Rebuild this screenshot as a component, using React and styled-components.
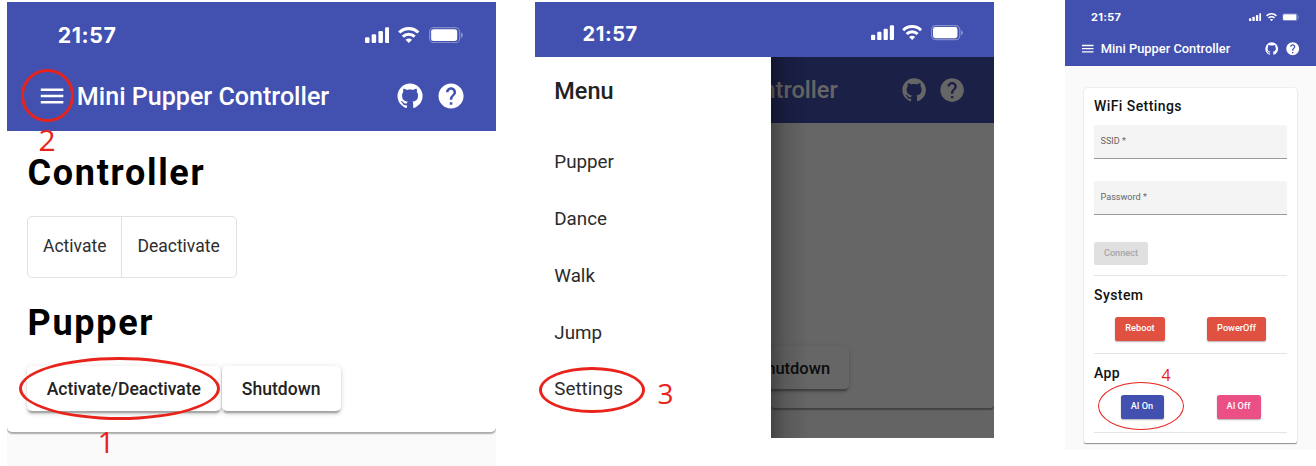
import React from "react";
import styled, { createGlobalStyle } from "styled-components";

const GlobalStyle = createGlobalStyle`
  body { margin: 0; background: #fff; }
  * { box-sizing: border-box; }
  h1, h2, h3, p, ul { margin: 0; padding: 0; }
`;

const u = (n) => `calc(var(--u) * ${n})`;

const BLUE = "#4250af";
const RED = "#e8231b";

const Page = styled.main`
  position: relative;
  display: flex;
  align-items: flex-start;
  width: 1316px;
  height: 466px;
  overflow: hidden;
  background: #fff;
  font-family: Roboto, "Liberation Sans", sans-serif;
  white-space: nowrap;
`;

const Phone = styled.section`
  --u: ${(p) => p.$unit}px;
  display: flex;
  flex-direction: column;
  flex: none;
  width: ${(p) => p.$width}px;
  height: ${(p) => p.$height}px;
  margin: ${(p) => p.$top}px 0 0 ${(p) => p.$left}px;
  background: #fafafa;
  overflow: hidden;
`;

const StatusRow = styled.div`
  display: flex;
  flex: none;
  align-items: center;
  height: ${u(47.1)};
  padding: ${u(5.8)} ${u(26)} 0 ${u(40.4)};
  background: ${BLUE};
  color: #fff;
`;

const Clock = styled.span`
  flex: 1;
  padding-top: ${u(0.7)};
  font: 700 ${u(17)} / 1.2 Inter, sans-serif;
  letter-spacing: ${u(0.5)};
`;

const StatusIcon = styled.svg`
  display: block;
  width: ${(p) => u(p.$w)};
  height: ${u(13)};
  margin-left: ${(p) => u(p.$gap)};
`;

const ToolbarRow = styled.div`
  display: flex;
  flex: none;
  align-items: center;
  height: ${u(56)};
  padding: 0 ${u(23.9)} 0 ${(p) => u(p.$start)};
  background: ${BLUE};
  color: #fff;
`;

const Icon = styled.svg`
  display: block;
  flex: none;
  width: ${u(24)};
  height: ${u(24)};
  margin-left: ${(p) => u(p.$gap || 0)};
  fill: currentColor;
`;

const Title = styled.h1`
  flex: ${(p) => (p.$clip ? "none" : 1)};
  margin-left: ${u(8)};
  padding-top: ${u(0.6)};
  font-size: ${u(20)};
  font-weight: 500;
  line-height: ${u(28)};
`;

const DimTitleSlot = styled.div`
  display: flex;
  flex: 1;
  min-width: 0;
  justify-content: flex-end;
  overflow: hidden;
  padding-right: ${u(52.6)};
`;

function StatusBar() {
  return (
    <StatusRow>
      <Clock>21:57</Clock>
      <StatusIcon $w={19.6} $gap={0} viewBox="0 0 19.6 13" fill="#fff">
        <rect x="0" y="8.2" width="3.6" height="4.6" rx="1" />
        <rect x="5.3" y="5.8" width="3.6" height="7" rx="1" />
        <rect x="10.7" y="3.2" width="3.6" height="9.6" rx="1" />
        <rect x="16" y="0.2" width="3.6" height="12.6" rx="1" />
      </StatusIcon>
      <StatusIcon $w={17.2} $gap={7.4} viewBox="0 0 17.2 13" fill="none" stroke="#fff" strokeWidth="2.5">
        <path d="M1 4.4C5.2.2 12 .2 16.2 4.4" />
        <path d="M3.9 7.7C6.5 5.1 10.7 5.1 13.3 7.7" />
        <path d="M8.6 12.8 6 10.2C7.5 8.8 9.7 8.8 11.2 10.2Z" fill="#fff" stroke="none" />
      </StatusIcon>
      <StatusIcon $w={27.4} $gap={7.2} viewBox="0 0 27.4 13" fill="none">
        <rect x="0.5" y="0.5" width="24" height="12" rx="3.6" stroke="#fff" strokeOpacity="0.35" />
        <rect x="1.7" y="1.8" width="20.8" height="9.4" rx="2" fill="#fff" />
        <path d="M25.7 4.4v4.2c.8-.35 1.3-1.2 1.3-2.1s-.5-1.75-1.3-2.1z" fill="#fff" fillOpacity="0.45" />
      </StatusIcon>
    </StatusRow>
  );
}

function ToolbarActions() {
  return (
    <>
      <Icon viewBox="0 0 24 24">
        <path d="M12 2A10 10 0 0 0 2 12c0 4.42 2.87 8.17 6.84 9.5.5.08.66-.23.66-.5v-1.69c-2.77.6-3.36-1.34-3.36-1.34-.46-1.16-1.11-1.47-1.11-1.47-.91-.62.07-.6.07-.6 1 .07 1.53 1.03 1.53 1.03.87 1.52 2.34 1.07 2.91.83.09-.65.35-1.09.63-1.34-2.22-.25-4.55-1.11-4.55-4.92 0-1.11.38-2 1.03-2.71-.1-.25-.45-1.29.1-2.64 0 0 .84-.27 2.75 1.02.79-.22 1.65-.33 2.5-.33s1.71.11 2.5.33c1.91-1.29 2.75-1.02 2.75-1.02.55 1.35.2 2.39.1 2.64.65.71 1.03 1.6 1.03 2.71 0 3.82-2.34 4.66-4.57 4.91.36.31.69.92.69 1.85V21c0 .27.16.59.67.5C19.14 20.16 22 16.42 22 12A10 10 0 0 0 12 2z" />
      </Icon>
      <Icon $gap={8.3} viewBox="0 0 24 24">
        <path d="M12 2C6.48 2 2 6.48 2 12s4.48 10 10 10 10-4.48 10-10S17.52 2 12 2zm1 17h-2v-2h2v2zm2.07-7.75l-.9.92C13.45 12.9 13 13.5 13 15h-2v-.5c0-1.1.45-2.1 1.17-2.83l1.24-1.26c.37-.36.59-.86.59-1.41 0-1.1-.9-2-2-2s-2 .9-2 2H8c0-2.21 1.79-4 4-4s4 1.79 4 4c0 .88-.36 1.68-.93 2.25z" />
      </Icon>
    </>
  );
}

function Toolbar() {
  return (
    <ToolbarRow $start={23.7}>
      <Icon viewBox="0 0 24 24">
        <path d="M3 18h18v-2H3v2zm0-5h18v-2H3v2zm0-7v2h18V6H3z" />
      </Icon>
      <Title>Mini Pupper Controller</Title>
      <ToolbarActions />
    </ToolbarRow>
  );
}

const ControllerCard = styled.div`
  flex: none;
  height: 301px;
  padding: 21.7px 20px 0;
  background: #fff;
  border-radius: 0 0 5px 5px;
  box-shadow: 0 1.5px 1.5px rgba(0, 0, 0, 0.32);
`;

const BigHeading = styled.h2`
  margin: ${(p) => p.$top || 0}px 0 0 0.5px;
  font-size: 36px;
  font-weight: 700;
  line-height: 40px;
  letter-spacing: 1.7px;
  color: #000;
`;

const ToggleGroup = styled.div`
  display: flex;
  width: 210px;
  height: 61.5px;
  margin-top: 23.5px;
  border: 1.5px solid #e2e2e2;
  border-radius: 5px;
`;

const Toggle = styled.span`
  display: flex;
  align-items: center;
  padding: 0 15px 2px 15px;
  font-size: 17.5px;
  color: #2e2e2e;

  & + & {
    border-left: 1px solid #e0e0e0;
  }
`;

const ButtonRow = styled.div`
  display: flex;
  gap: 1px;
  margin-top: 22.5px;
`;

const RaisedButton = styled.span`
  display: flex;
  align-items: center;
  justify-content: center;
  width: ${(p) => u(p.$w)};
  height: ${u(36)};
  flex: none;
  padding-top: 1px;
  border-radius: ${u(4)};
  background: #fff;
  color: #222;
  font-size: ${u(14)};
  font-weight: 500;
  box-shadow: 0 ${u(3)} ${u(1)} ${u(-2)} rgba(0, 0, 0, 0.2),
    0 ${u(2)} ${u(2)} rgba(0, 0, 0, 0.14), 0 ${u(1)} ${u(5)} rgba(0, 0, 0, 0.12);
`;

const DrawerBody = styled.div`
  display: flex;
  flex: 1;
  min-height: 0;
`;

const Drawer = styled.nav`
  width: 236px;
  flex: none;
  padding-left: 19.3px;
  background: #fff;
  color: #222;
`;

const DrawerTitle = styled.h2`
  padding-top: 1px;
  font-size: 23.5px;
  font-weight: 500;
  line-height: 67px;
`;

const MenuList = styled.ul`
  padding-top: 9px;
  list-style: none;
`;

const MenuItem = styled.li`
  font-size: 18.8px;
  line-height: 56.7px;
  color: #2b2b2b;
`;

const Backdrop = styled.div`
  position: relative;
  flex: 1;
  min-width: 0;
  overflow: hidden;
  background: #fafafa;

  &::after {
    content: "";
    position: absolute;
    inset: 0;
    background: linear-gradient(90deg, rgba(0, 0, 0, 0.32), rgba(0, 0, 0, 0.12) 14px, transparent 38px),
      rgba(0, 0, 0, 0.6);
  }
`;

const BackdropCard = styled.div`
  display: flex;
  align-items: flex-end;
  justify-content: flex-end;
  height: 284.3px;
  padding: 0 145px 18.8px 0;
  background: #fff;
  border-radius: 0 0 4px 4px;
  box-shadow: 0 1.5px 1.5px rgba(0, 0, 0, 0.35);
`;

const SettingsCard = styled.div`
  width: 213px;
  height: 355.2px;
  margin: 21.2px 0 0 19px;
  padding: 8.5px 10px 0;
  background: #fff;
  border-radius: 2.6px;
  box-shadow: 0 1.3px 0.7px -0.7px rgba(0, 0, 0, 0.25), 0 0.7px 1px rgba(0, 0, 0, 0.14),
    0 0.6px 2px rgba(0, 0, 0, 0.12);
`;

const SectionTitle = styled.h3`
  margin-top: ${(p) => p.$top || 0}px;
  font-size: 14px;
  font-weight: 500;
  line-height: 20px;
  letter-spacing: 0.42px;
  color: #111;
`;

const Field = styled.div`
  height: 33.5px;
  margin-top: ${(p) => p.$top}px;
  padding-left: 6.5px;
  border-bottom: 1px solid #999;
  border-radius: 2px 2px 0 0;
  background: #f4f4f4;
  font-size: 9.1px;
  line-height: 33px;
  color: #666;
`;

const Rule = styled.div`
  height: 1px;
  margin-top: ${(p) => p.$top}px;
  background: #e4e4e4;
`;

const ActionRow = styled.div`
  display: flex;
  justify-content: space-around;
  margin-top: ${(p) => p.$top}px;
`;

const ActionButton = styled.span`
  display: flex;
  align-items: center;
  justify-content: center;
  width: ${(p) => p.$w}px;
  height: 24px;
  padding-bottom: 2px;
  border-radius: 2.6px;
  background: ${(p) => p.$color};
  color: #fff;
  font-size: 9.2px;
  font-weight: 500;
  box-shadow: 0 1px 1.5px rgba(0, 0, 0, 0.3);
`;

const DisabledButton = styled(ActionButton)`
  height: 23px;
  margin-top: 27.5px;
  color: #a6a6a6;
  box-shadow: none;
`;

const Ring = styled.div`
  position: absolute;
  left: ${(p) => p.$x}px;
  top: ${(p) => p.$y}px;
  width: ${(p) => p.$w}px;
  height: ${(p) => p.$h}px;
  border: ${(p) => p.$stroke}px solid ${RED};
  border-radius: 50%;
`;

const StepNumber = styled.span`
  position: absolute;
  left: ${(p) => p.$x}px;
  top: ${(p) => p.$y}px;
  font: 400 ${(p) => p.$size}px / 1 "Open Sans", sans-serif;
  color: ${RED};
`;

export default function App() {
  return (
    <Page>
      <GlobalStyle />

      <Phone $unit={1.254} $width={489} $height={464} $top={2} $left={7}>
        <StatusBar />
        <Toolbar />
        <ControllerCard>
          <BigHeading>Controller</BigHeading>
          <ToggleGroup>
            <Toggle>Activate</Toggle>
            <Toggle>Deactivate</Toggle>
          </ToggleGroup>
          <BigHeading $top={25.5}>Pupper</BigHeading>
          <ButtonRow>
            <RaisedButton $w={154.5}>Activate/Deactivate</RaisedButton>
            <RaisedButton $w={94.8}>Shutdown</RaisedButton>
          </ButtonRow>
        </ControllerCard>
      </Phone>

      <Phone $unit={1.177} $width={459} $height={436} $top={2} $left={39}>
        <StatusBar />
        <DrawerBody>
          <Drawer>
            <DrawerTitle>Menu</DrawerTitle>
            <MenuList>
              <MenuItem>Pupper</MenuItem>
              <MenuItem>Dance</MenuItem>
              <MenuItem>Walk</MenuItem>
              <MenuItem>Jump</MenuItem>
              <MenuItem>Settings</MenuItem>
            </MenuList>
          </Drawer>
          <Backdrop>
            <ToolbarRow $start={0}>
              <DimTitleSlot>
                <Title $clip>Mini Pupper Controller</Title>
              </DimTitleSlot>
              <ToolbarActions />
            </ToolbarRow>
            <BackdropCard>
              <RaisedButton $w={94.8}>Shutdown</RaisedButton>
            </BackdropCard>
          </Backdrop>
        </DrawerBody>
      </Phone>

      <Phone $unit={0.6436} $width={251} $height={450} $top={0} $left={71}>
        <StatusBar />
        <Toolbar />
        <SettingsCard>
          <SectionTitle>WiFi Settings</SectionTitle>
          <Field $top={9}>SSID *</Field>
          <Field $top={22.5}>Password *</Field>
          <DisabledButton $w={54} $color="#e0e0e0">Connect</DisabledButton>
          <Rule $top={10} />
          <SectionTitle $top={8.5}>System</SectionTitle>
          <ActionRow $top={12}>
            <ActionButton $w={50} $color="#e05141">Reboot</ActionButton>
            <ActionButton $w={59} $color="#e05141">PowerOff</ActionButton>
          </ActionRow>
          <Rule $top={12.5} />
          <SectionTitle $top={9}>App</SectionTitle>
          <ActionRow $top={11.5}>
            <ActionButton $w={43} $color={BLUE}>AI On</ActionButton>
            <ActionButton $w={44} $color="#ea4f86">AI Off</ActionButton>
          </ActionRow>
          <Rule $top={13} />
        </SettingsCard>
      </Phone>

      <Ring $x={19} $y={357} $w={201} $h={63} $stroke={3} />
      <StepNumber $x={97.5} $y={427} $size={30}>1</StepNumber>
      <Ring $x={21} $y={69} $w={52.5} $h={52.5} $stroke={3} />
      <StepNumber $x={38.5} $y={125} $size={30}>2</StepNumber>
      <Ring $x={538.5} $y={367} $w={106} $h={46} $stroke={3} />
      <StepNumber $x={657.5} $y={379} $size={28}>3</StepNumber>
      <Ring $x={1098} $y={381.5} $w={86} $h={48} $stroke={1.5} />
      <StepNumber $x={1161.5} $y={367} $size={16}>4</StepNumber>
    </Page>
  );
}
